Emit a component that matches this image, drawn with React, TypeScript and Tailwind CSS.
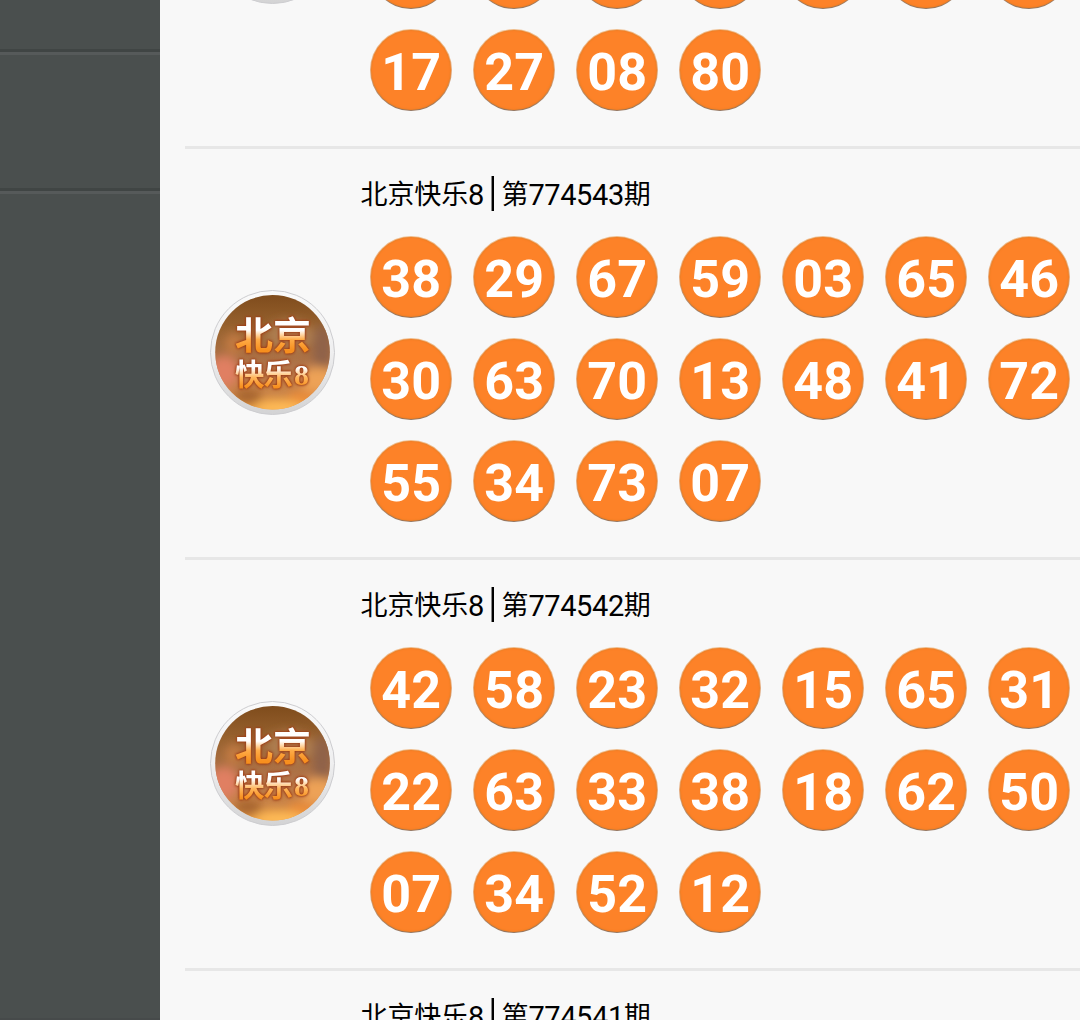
import React from "react";

type Draw = { issue: string; rows: string[][] };

const draws: Draw[] = [
  { issue: "", rows: [Array(7).fill(""), Array(7).fill(""), ["17", "27", "08", "80"]] },
  {
    issue: "774543",
    rows: [
      ["38", "29", "67", "59", "03", "65", "46"],
      ["30", "63", "70", "13", "48", "41", "72"],
      ["55", "34", "73", "07"],
    ],
  },
  {
    issue: "774542",
    rows: [
      ["42", "58", "23", "32", "15", "65", "31"],
      ["22", "63", "33", "38", "18", "62", "50"],
      ["07", "34", "52", "12"],
    ],
  },
  { issue: "774541", rows: [] },
];

function Ball({ value }: { value: string }) {
  return (
    <div className="h-[82px] w-[82px] shrink-0 rounded-full bg-linear-to-b from-[#efbd8c] via-[#e5a878] to-[#94755f] p-[1px]">
      <div className="flex h-full w-full items-center justify-center rounded-full bg-[#fd8228] pt-[6px] text-[52px] leading-none font-bold text-white shadow-[inset_0_0_2px_#d7791f]">
        {value}
      </div>
    </div>
  );
}

function Logo({ id, labelled }: { id: string; labelled: boolean }) {
  const face = `face-${id}`;
  const ring = `ring-${id}`;
  const top = `top-${id}`;
  const low = `low-${id}`;
  const soft = `soft-${id}`;
  const clip = `clip-${id}`;
  return (
    <svg className="h-[126px] w-[126px] shrink-0" viewBox="0 0 126 126">
      <defs>
        <linearGradient id={ring} x1="0" y1="0" x2="0" y2="1">
          <stop offset="0" stopColor="#fafafa" />
          <stop offset="0.5" stopColor="#efeff0" />
          <stop offset="1" stopColor="#d3d3d4" />
        </linearGradient>
        <linearGradient id={face} x1="0" y1="0" x2="0" y2="1">
          <stop offset="0.04" stopColor="#7f4c1c" />
          <stop offset="0.3" stopColor="#98622f" />
          <stop offset="0.6" stopColor="#b0744a" />
          <stop offset="0.82" stopColor="#cc8648" />
          <stop offset="1" stopColor="#f4a239" />
        </linearGradient>
        <linearGradient id={top} gradientUnits="userSpaceOnUse" x1="0" y1="27" x2="0" y2="60">
          <stop offset="0.4" stopColor="#ffffff" />
          <stop offset="0.68" stopColor="#ffac48" />
          <stop offset="1" stopColor="#f78f1e" />
        </linearGradient>
        <linearGradient id={low} gradientUnits="userSpaceOnUse" x1="0" y1="70" x2="0" y2="97">
          <stop offset="0.3" stopColor="#ffffff" />
          <stop offset="0.65" stopColor="#ffb65c" />
          <stop offset="1" stopColor="#f78f1e" />
        </linearGradient>
        <filter id={soft} x="-50%" y="-50%" width="200%" height="200%">
          <feGaussianBlur stdDeviation="5" />
        </filter>
        <clipPath id={clip}>
          <circle cx="62.5" cy="62.3" r="57.3" />
        </clipPath>
      </defs>
      <circle cx="62.5" cy="62.5" r="62" fill={`url(#${ring})`} stroke="#cdcdd0" strokeWidth="1" />
      <g clipPath={`url(#${clip})`}>
        <rect width="126" height="126" fill={`url(#${face})`} />
        <g filter={`url(#${soft})`}>
          <ellipse cx="14" cy="82" rx="15" ry="16" fill="#e07f62" />
          <ellipse cx="24" cy="54" rx="9" ry="11" fill="#c27a42" />
          <ellipse cx="80" cy="46" rx="24" ry="16" fill="#ad7d50" />
          <ellipse cx="112" cy="58" rx="9" ry="24" fill="#8f624a" />
          <ellipse cx="108" cy="90" rx="18" ry="13" fill="#eda257" />
          <ellipse cx="38" cy="106" rx="14" ry="7" fill="#a5642d" />
          <ellipse cx="92" cy="108" rx="14" ry="7" fill="#e98a38" />
          <ellipse cx="70" cy="118" rx="26" ry="7" fill="#ffbc58" />
        </g>
      </g>
      {labelled && (
        <g className="[filter:drop-shadow(0_0_1px_#93340f)_drop-shadow(0_0_1.5px_#a8441b)]">
          <g className="font-['Noto_Sans_CJK_SC',sans-serif] font-bold">
            <text x="25" y="58.500" fontSize="38" textLength="76" fill={`url(#${top})`}>北京</text>
            <text x="25" y="95" fontSize="29.500" textLength="58" fill={`url(#${low})`}>快乐</text>
          </g>
          <text
            x="84"
            y="95"
            fontSize="30"
            className="font-['Liberation_Serif',serif] font-bold"
            fill={`url(#${low})`}
          >
            8
          </text>
        </g>
      )}
    </svg>
  );
}

function Title({ issue }: { issue: string }) {
  return (
    <div className="flex h-[36px] pl-[0.5px] text-[27px] leading-[36px] whitespace-nowrap text-black">
      <span className="pt-[1px] tracking-[-0.1px]">北京快乐</span>
      <span className="pt-[1px] text-[29px]">8</span>
      <span className="mr-[7px] ml-[7px] h-[35px] w-[3px] border-l border-[#888888] bg-black" />
      <span className="pt-[1px]">第</span>
      <span className="pt-[1px] text-[29px] tracking-[-0.4px]">{issue}</span>
      <span className="pt-[1px]">期</span>
    </div>
  );
}

function DrawItem({ draw, index }: { draw: Draw; index: number }) {
  return (
    <section className="flex h-[411px] shrink-0 border-b-[3px] border-[#e7e7e7] pl-[25px]">
      <div className="w-[126px] shrink-0 pt-[141px]">
        {draw.rows.length > 0 && <Logo id={String(index)} labelled={draw.issue !== ""} />}
      </div>
      <div className="ml-[24px] pt-[27px]">
        {draw.issue ? <Title issue={draw.issue} /> : <div className="h-[36px]" />}
        <div className="mt-[24px] ml-[10.2px] flex flex-col gap-[20px]">
          {draw.rows.map((row, r) => (
            <div key={r} className="flex gap-[21px]">
              {row.map((value, c) => (
                <Ball key={c} value={value} />
              ))}
            </div>
          ))}
        </div>
      </div>
    </section>
  );
}

export default function App() {
  return (
    <div className="flex h-[1020px] w-[1080px] overflow-hidden bg-[#f8f8f8] font-[Roboto,'Noto_Sans_CJK_SC',sans-serif]">
      <aside className="flex w-[160px] shrink-0 flex-col bg-[#4a4f4e]">
        <div className="h-[49px]" />
        <div className="h-[6px] border-t-[3px] border-[#404544] bg-[#565a5a]" />
        <div className="h-[133px]" />
        <div className="h-[6px] border-t-[3px] border-[#404544] bg-[#565a5a]" />
        <div className="grow" />
        <div className="h-[2px] bg-[#464a4a]" />
      </aside>
      <main className="ml-[25px] w-[895px] overflow-hidden">
        <div className="-mt-[262px] flex flex-col">
          {draws.map((draw, i) => (
            <DrawItem key={i} draw={draw} index={i} />
          ))}
        </div>
      </main>
    </div>
  );
}
